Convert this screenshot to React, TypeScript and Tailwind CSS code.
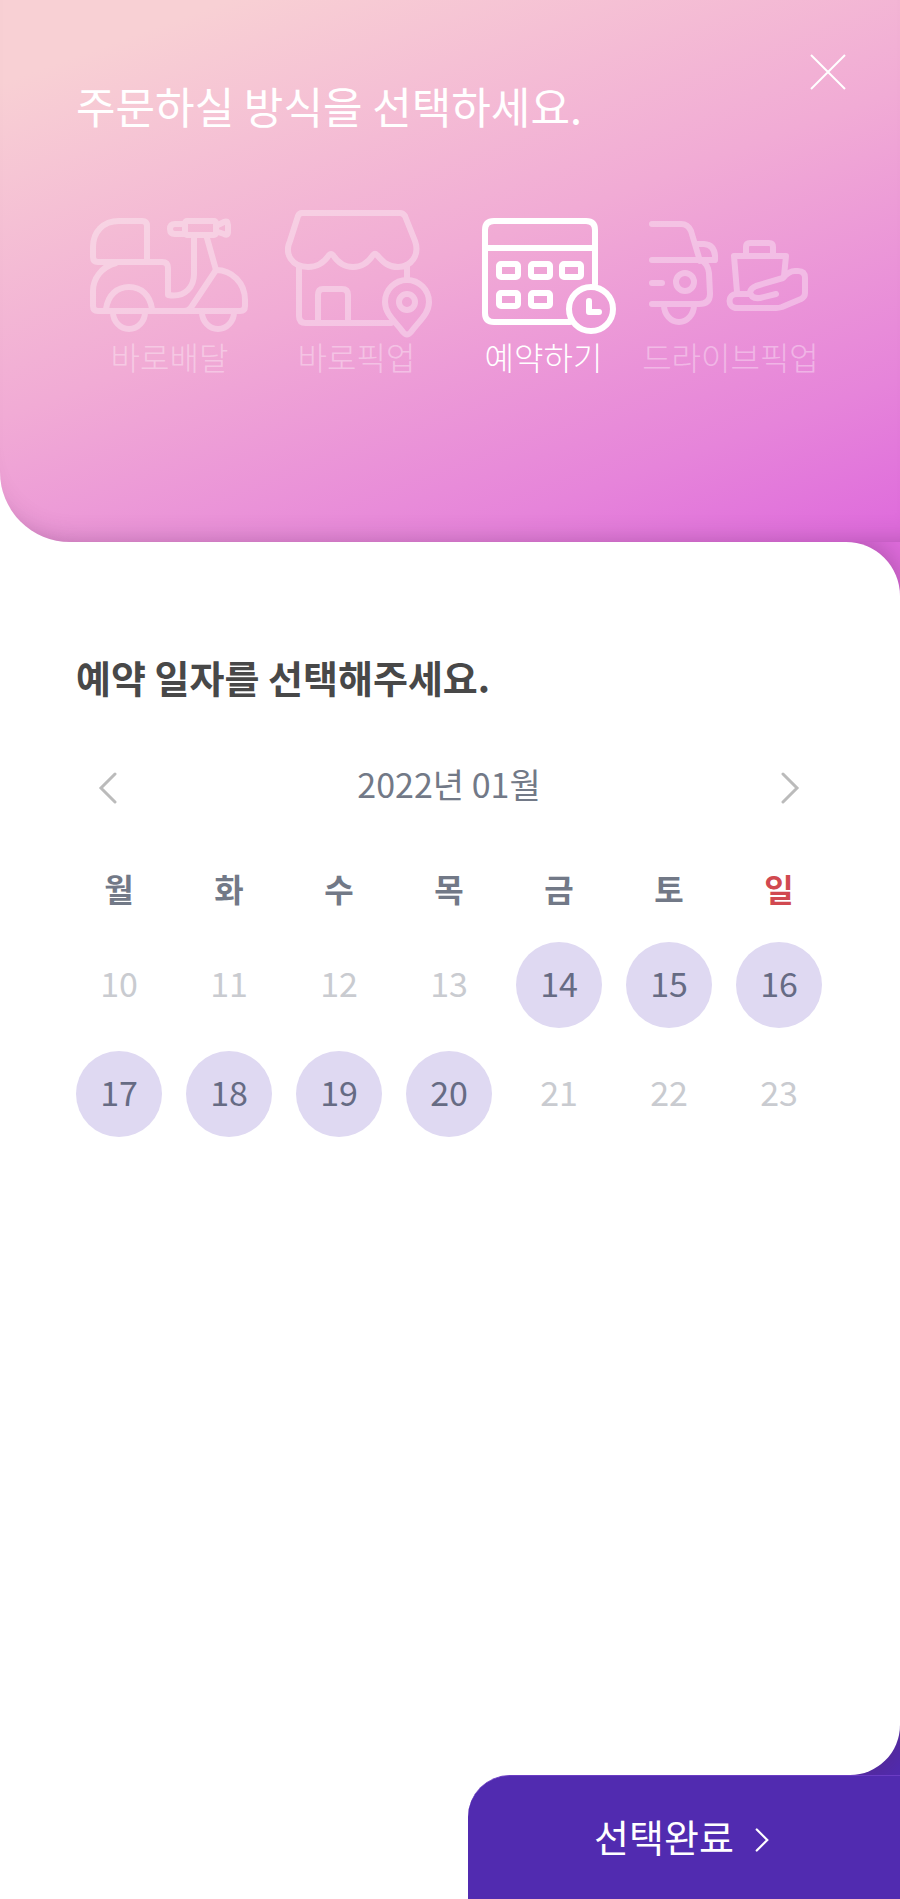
import React, { useState } from 'react';

type IconProps = { className?: string };

const iconProps = {
    width: 160,
    height: 126,
    fill: 'none',
    stroke: 'currentColor',
    strokeWidth: 6,
    strokeLinecap: 'round' as const,
    strokeLinejoin: 'round' as const,
    'aria-hidden': true,
};

const ScooterIcon: React.FC<IconProps> = ({ className }) => (
    <svg viewBox="8 0 160 126" className={className} {...iconProps}>
        {/* Box */}
        <path d="M37 21H60Q65 21 65 26V62H16Q11 62 11 57V47C11 32 21 21 37 21Z" />
        {/* Body */}
        <path d="M65 62H80Q86 62 86 68V95C104 98 112 86 112 74V37" />
        <path d="M34 63C19 67 11 79 11 91V106Q11 111 16 111H158Q163 111 163 106V100C163 83 150 70 134 70L110 106Q107 111 102 111" />
        <path d="M125 38L134 70" />
        {/* Fender and wheels */}
        <path d="M24 109C26 95 35 87 47 87S68 95 70 109" />
        <path d="M31 112A16 17 0 0 0 63 112M120 112A16 17 0 0 0 152 112" />
        {/* Handlebar */}
        <rect x="103" y="21" width="31" height="14" rx="2" />
        <path d="M102 24H93Q88 24 88 29T93 34H102M136 25L142 22Q146 20 146 25V32Q146 36 142 34L136 32" />
    </svg>
);

const StoreIcon: React.FC<IconProps> = ({ className }) => (
    <svg viewBox="6 0 160 126" className={className} {...iconProps}>
        <path d="M30 13H129Q132 13 134 16L144 41C149 55 140 67 127 67C117 67 112 62 106 55Q104 53 102 55C97 63 91 67 82 67S67 63 62 55Q60 53 58 55C53 63 47 67 37 67C21 67 13 54 19 41L27 16Q28 13 32 13Z" />
        <path d="M28 66V116Q28 123 35 123H120M136 65V80" />
        <path d="M47 122V95Q47 89 52 89H71Q77 89 77 95V122" />
        <path d="M136 80A22 22 0 0 0 114 102C114 114 124 121 132 132Q136 137 140 132C148 121 158 114 158 102A22 22 0 0 0 136 80Z" />
        <circle cx="136" cy="102" r="8" />
    </svg>
);

const CalendarIcon: React.FC<IconProps> = ({ className }) => (
    <svg viewBox="4 0 160 126" className={className} {...iconProps}>
        <path d="M110 122H34Q25 122 25 113V30Q25 21 34 21H126Q135 21 135 30V84M25 48H135" />
        <rect x="39" y="64" width="19" height="13" rx="2" />
        <rect x="71" y="64" width="19" height="13" rx="2" />
        <rect x="102" y="64" width="19" height="13" rx="2" />
        <rect x="39" y="93" width="19" height="13" rx="2" />
        <rect x="71" y="93" width="19" height="13" rx="2" />
        <circle cx="131" cy="109" r="22" />
        <path d="M129 101V112H139" />
    </svg>
);

const DriveIcon: React.FC<IconProps> = ({ className }) => (
    <svg viewBox="2 0 160 126" className={className} {...iconProps}>
        {/* Car */}
        <path d="M3 24H32Q39 24 42 31L51 61M3 60H66Q67 45 55 44H47M3 83H13M3 104H50Q61 104 61 94L60 73Q59 64 52 60" />
        <circle cx="36" cy="82" r="9" />
        <path d="M15 105A15 17 0 0 0 45 105" />
        {/* Bag */}
        <path d="M88 92L85 56H137L135 76M97 55V47Q97 43 101 43H120Q124 43 124 47V55" />
        {/* Hand */}
        <path d="M127 94L111 98Q102 99 101 92Q102 88 107 86L134 78Q140 71 146 71H149Q156 71 156 78V93Q156 97 152 99L133 107Q130 108 127 108H88C78 108 78 94 88 94H100" />
    </svg>
);

const METHODS = [
    { id: 'delivery', label: '바로배달', Icon: ScooterIcon },
    { id: 'pickup', label: '바로픽업', Icon: StoreIcon },
    { id: 'reserve', label: '예약하기', Icon: CalendarIcon },
    { id: 'drive', label: '드라이브픽업', Icon: DriveIcon },
];

const WEEKDAYS = ['월', '화', '수', '목', '금', '토', '일'];

const WEEKS = [
    [10, 11, 12, 13, 14, 15, 16],
    [17, 18, 19, 20, 21, 22, 23],
];

const isAvailable = (day: number) => day >= 14 && day <= 20;

const Chevron: React.FC<{ flip?: boolean; className?: string }> = ({ flip, className }) => (
    <svg viewBox="0 0 20 32" fill="none" stroke="currentColor" strokeWidth="3" strokeLinecap="round" aria-hidden className={className}>
        <path d={flip ? 'M17 2L3 16L17 30' : 'M3 2L17 16L3 30'} />
    </svg>
);

const App: React.FC = () => {
    const [method, setMethod] = useState('reserve');

    return (
        <div className="flex min-h-screen flex-col bg-white font-['Noto_Sans_CJK_KR',sans-serif]">
            <header className="h-[542px] rounded-bl-[70px] bg-[linear-gradient(160deg,#f8d0d4_9%,#f1abd5_45%,#e684da_76%,#df6cdc_92%)] bg-[length:100%_600px] px-[76px] pt-[78px] shadow-[inset_0_-24px_28px_-28px_rgba(90,40,90,0.45)]">
                <button type="button" aria-label="닫기" className="absolute top-[50px] right-[50px] p-1 text-white">
                    <svg viewBox="0 0 36 36" width="36" height="36" fill="none" stroke="currentColor" strokeWidth="2" aria-hidden>
                        <path d="M1 1L35 35M35 1L1 35" />
                    </svg>
                </button>
                <h1 className="text-[43px] leading-[54px] text-white">주문하실 방식을 선택하세요.</h1>

                {/* Order methods */}
                <div className="mt-[68px] grid grid-cols-4">
                    {METHODS.map(({ id, label, Icon }) => (
                        <button
                            key={id}
                            type="button"
                            aria-pressed={method === id}
                            onClick={() => setMethod(id)}
                            className={`flex flex-col items-center whitespace-nowrap text-white ${method === id ? '' : 'opacity-35'}`}
                        >
                            <Icon className="overflow-visible" />
                            <span className="mt-2 text-[32px] leading-[44px] font-light">{label}</span>
                        </button>
                    ))}
                </div>
            </header>

            {/* The header gradient carries on behind the top corner, the footer colour behind the bottom one */}
            <div className="flex grow flex-col overflow-hidden bg-[#512bb0] bg-[linear-gradient(160deg,#f8d0d4_9%,#f1abd5_45%,#e684da_76%,#df6cdc_92%)] bg-[length:100%_600px] bg-[position:0_-542px] bg-no-repeat">
                <main className="grow rounded-tr-[54px] rounded-br-[50px] bg-white pt-28 pr-[66px] pl-16 shadow-[0_0_30px_rgba(90,40,90,0.45)]">
                    <h2 className="px-3 text-[38px] leading-[46px] font-bold text-[#484848]">예약 일자를 선택해주세요.</h2>

                    <div className="mt-[58px] flex items-center justify-between px-[30px]">
                        <button type="button" aria-label="이전 달" className="px-1 pt-2 text-[#bbbbbb]">
                            <Chevron flip className="h-8 w-5" />
                        </button>
                        <p className="text-[34px] leading-[52px] text-[#727987]">2022년 01월</p>
                        <button type="button" aria-label="다음 달" className="px-1 pt-2 text-[#bbbbbb]">
                            <Chevron className="h-8 w-5" />
                        </button>
                    </div>

                    <table className="mt-9 w-full table-fixed text-center text-[#727987]">
                        <thead>
                            <tr className="h-[84px] text-[32px]">
                                {WEEKDAYS.map((name) => (
                                    <th key={name} scope="col" className={`p-0 font-bold ${name === '일' ? 'text-[#d14950]' : ''}`}>
                                        {name}
                                    </th>
                                ))}
                            </tr>
                        </thead>
                        <tbody>
                            {WEEKS.map((week) => (
                                <tr key={week[0]} className="h-[109px]">
                                    {week.map((day) => (
                                        <td key={day} className="p-0">
                                            <button
                                                type="button"
                                                disabled={!isAvailable(day)}
                                                className={`size-[86px] rounded-full pb-1 align-middle text-[34px] leading-none ${isAvailable(day) ? 'bg-[#dfd9f2] text-[#666b84]' : 'text-[#c9cbd0]'}`}
                                            >
                                                {day}
                                            </button>
                                        </td>
                                    ))}
                                </tr>
                            ))}
                        </tbody>
                    </table>
                </main>
            </div>

            <footer className="flex justify-end">
                <button
                    type="button"
                    className="flex h-[124px] w-[48%] items-center justify-center gap-5 rounded-tl-[42px] border-t border-[#6b3cc4] bg-[#512bb0] pr-1 pb-1 text-[38px] text-white"
                >
                    선택완료
                    <Chevron className="mt-2 h-6 w-4" />
                </button>
            </footer>
        </div>
    );
};

export default App;
